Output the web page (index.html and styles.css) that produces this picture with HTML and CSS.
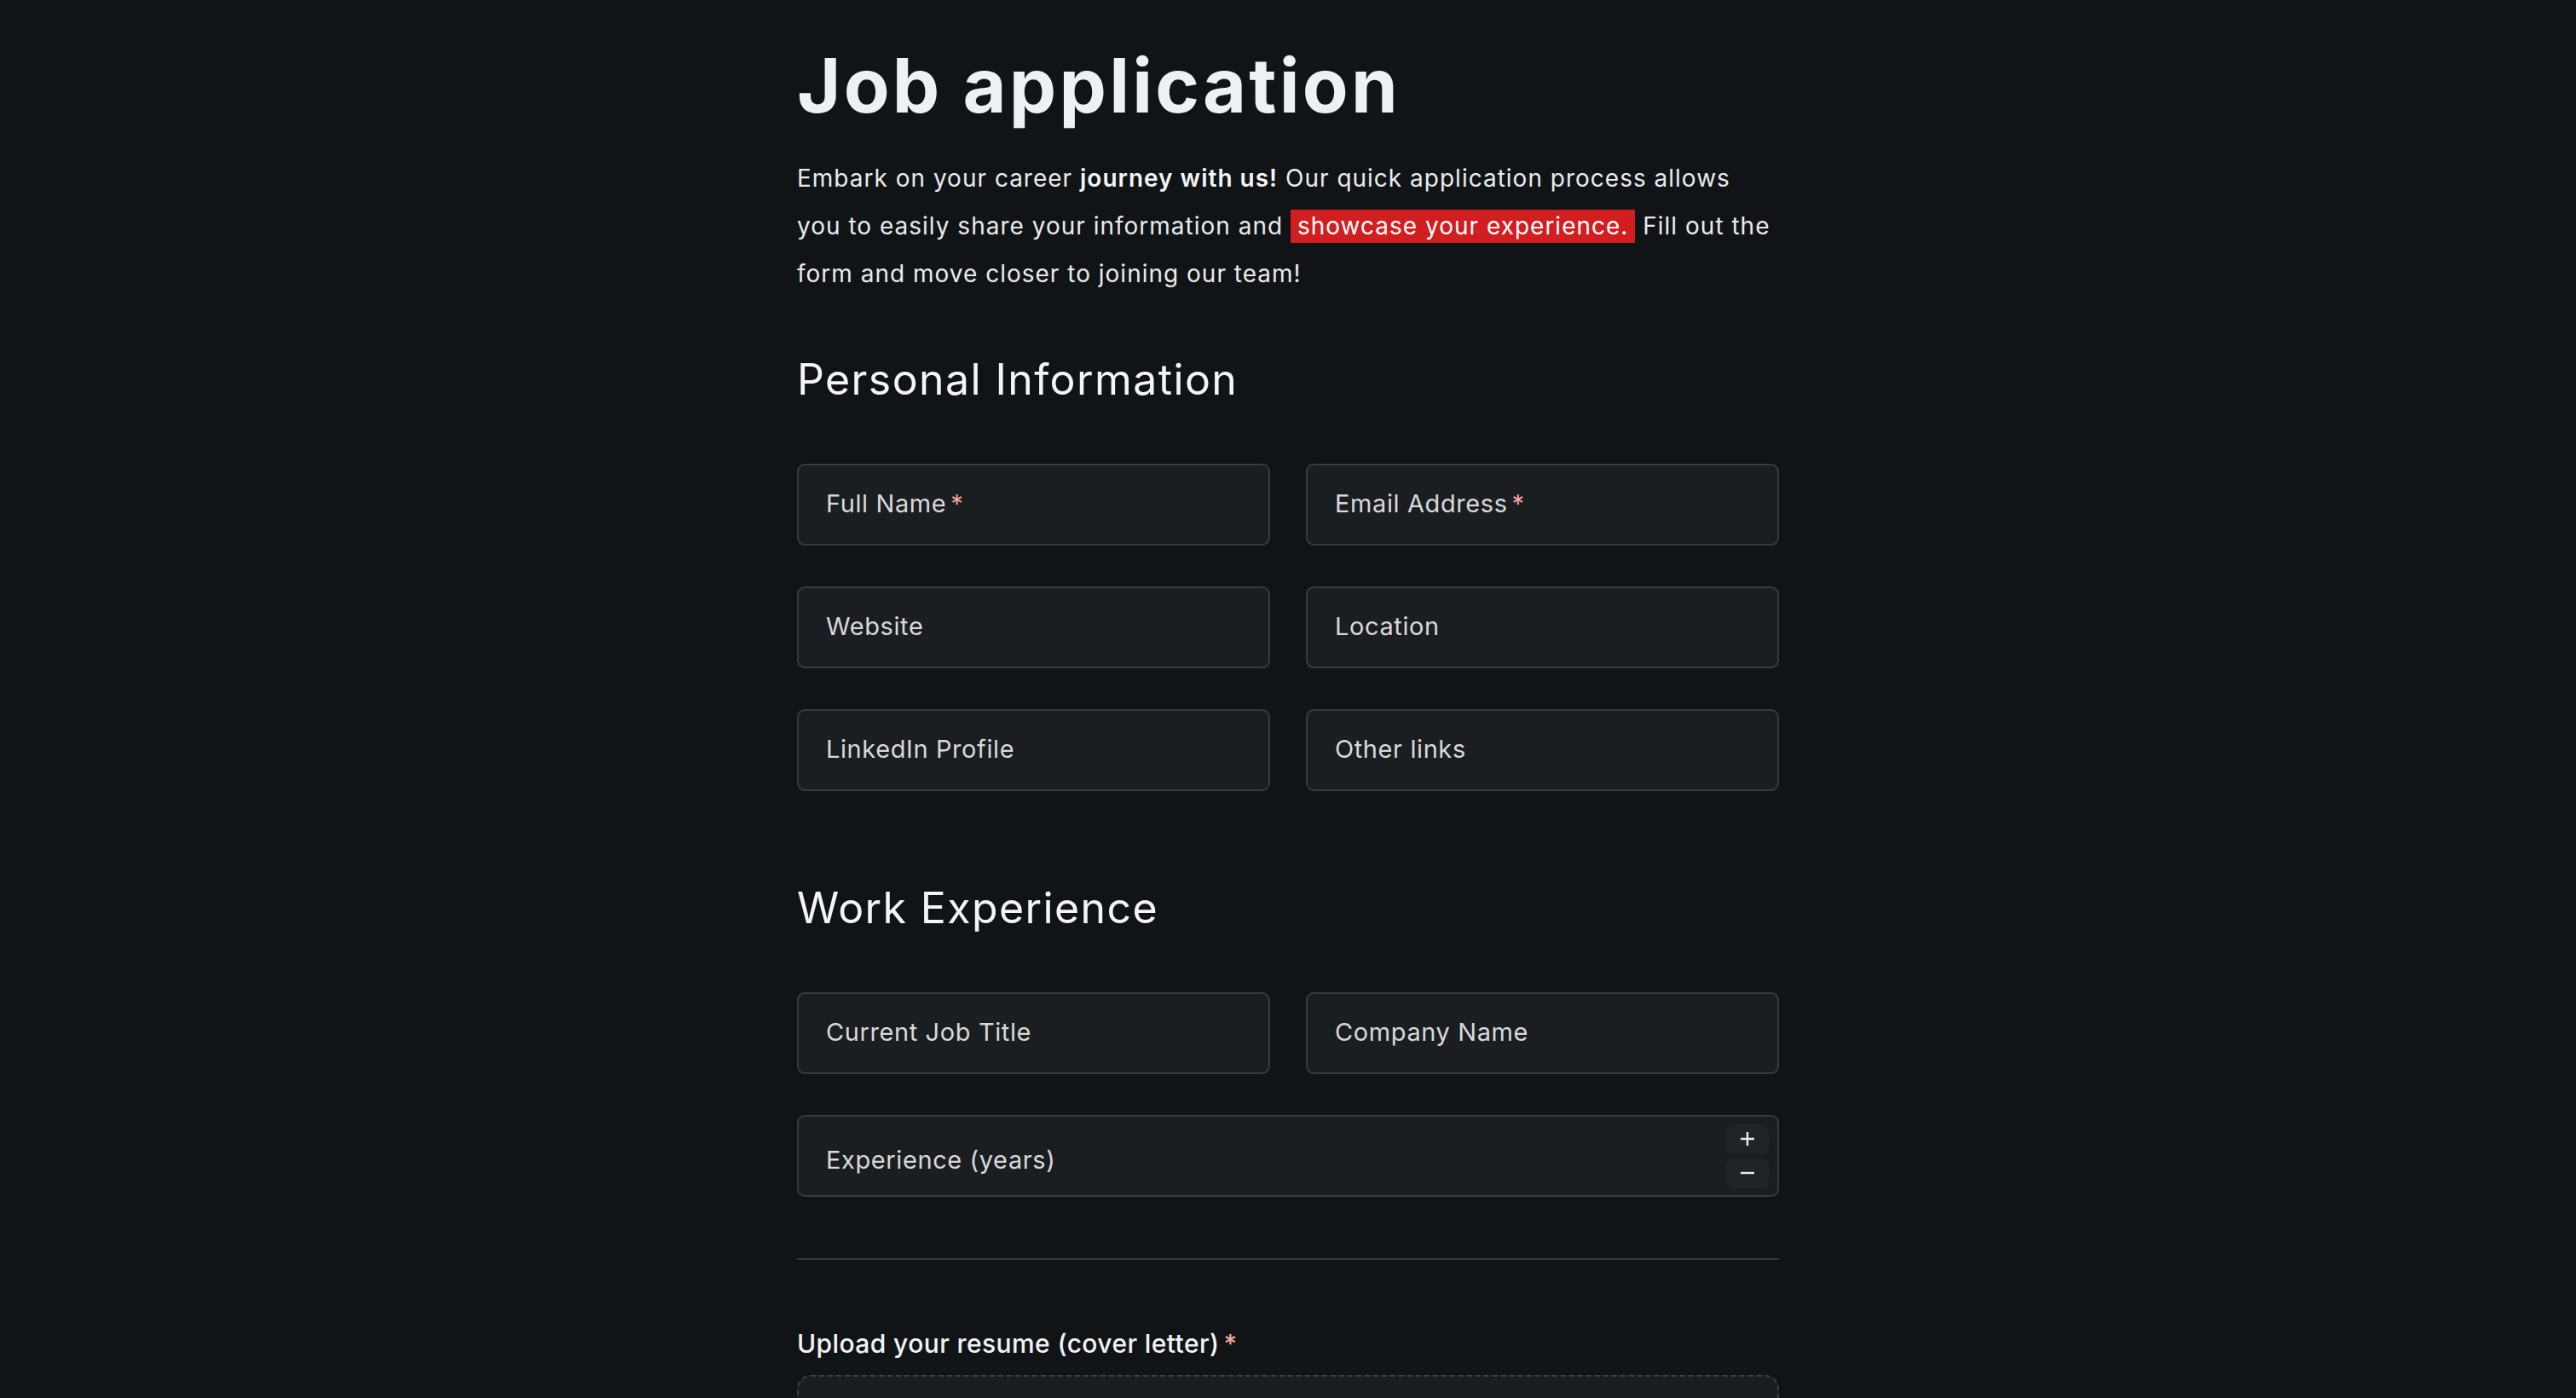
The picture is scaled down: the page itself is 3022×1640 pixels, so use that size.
FILE: index.html
```html
<!DOCTYPE html>
<html lang="en">
<head>
<meta charset="utf-8">
<title>Job application</title>
<link rel="stylesheet" href="styles.css">
</head>
<body>
<main class="container">
  <h1 class="title">Job application</h1>
  <p class="intro">Embark on your career <strong>journey with us!</strong> Our quick application process allows you to easily share your information and <mark class="hl">showcase your experience.</mark> Fill out the form and move closer to joining our team!</p>

  <section class="section">
    <h2 class="section-title">Personal Information</h2>
    <div class="grid">
      <div class="field"><span class="label">Full Name<span class="req">*</span></span></div>
      <div class="field"><span class="label">Email Address<span class="req">*</span></span></div>
      <div class="field"><span class="label">Website</span></div>
      <div class="field"><span class="label">Location</span></div>
      <div class="field"><span class="label">LinkedIn Profile</span></div>
      <div class="field"><span class="label">Other links</span></div>
    </div>
  </section>

  <section class="section section-work">
    <h2 class="section-title">Work Experience</h2>
    <div class="grid">
      <div class="field"><span class="label">Current Job Title</span></div>
      <div class="field"><span class="label">Company Name</span></div>
      <div class="field field-number span-2">
        <span class="label label-number">Experience (years)</span>
        <div class="spin">
          <div class="spin-btn">
            <svg width="20" height="20" viewBox="0 0 20 20"><path d="M10 2v16M2 10h16" stroke="#ececec" stroke-width="2.4" fill="none"/></svg>
          </div>
          <div class="spin-btn">
            <svg width="20" height="20" viewBox="0 0 20 20"><path d="M2 10h16" stroke="#ececec" stroke-width="2.4" fill="none"/></svg>
          </div>
        </div>
      </div>
    </div>
  </section>

  <hr class="divider">

  <section class="upload">
    <div class="upload-label">Upload your resume (cover letter)<span class="req">*</span></div>
    <div class="dropzone"></div>
  </section>
</main>
</body>
</html>
```
FILE: styles.css
```css
html, body {
  margin: 0;
  padding: 0;
  background: #111417;
}
body {
  font-family: Inter, "Noto Sans", sans-serif;
  color: #eceef0;
}
.container {
  width: 1152px;
  margin: 0 auto;
  padding-top: 48px;
}
.title {
  margin: 0;
  font-size: 88px;
  line-height: 104px;
  font-weight: 700;
  letter-spacing: 3.2px;
  color: #eef1f4;
}
.intro {
  margin: 29px 0 0;
  font-size: 28px;
  line-height: 56px;
  letter-spacing: 1px;
  color: #e9ebed;
  width: 1150px;
}
.intro strong {
  font-weight: 600;
  color: #f4f5f6;
}
.hl {
  background: #d11e20;
  color: #ffffff;
  padding: 2px 8px 3px;
}
.section {
  margin-top: 66px;
}
.section-work {
  margin-top: 107px;
}
.section-title {
  margin: 0 0 69px;
  font-size: 50px;
  line-height: 60px;
  font-weight: 400;
  letter-spacing: 1.4px;
  color: #f3f5f7;
}
.grid {
  display: grid;
  grid-template-columns: 1fr 1fr;
  column-gap: 42px;
  row-gap: 48px;
}
.span-2 {
  grid-column: 1 / span 2;
}
.field {
  box-sizing: border-box;
  height: 96px;
  background: #1b1e21;
  border: 2px solid #383b3e;
  border-radius: 9px;
  display: flex;
  align-items: center;
  padding: 0 10px 0 32px;
}
.label {
  font-size: 29px;
  letter-spacing: 0.6px;
  color: #d7d9db;
  margin-top: -4px;
}
.req {
  color: #f2a59c;
  margin-left: 5px;
}
.field-number {
  justify-content: space-between;
}
.label-number {
  margin-top: 8px;
}
.spin {
  display: flex;
  flex-direction: column;
  gap: 5px;
}
.spin-btn {
  width: 50px;
  height: 35px;
  background: #212427;
  border-radius: 8px;
  display: flex;
  align-items: center;
  justify-content: center;
}
.divider {
  margin: 72px 0 0;
  border: 0;
  height: 2px;
  background: #34373a;
}
.upload {
  margin-top: 78px;
}
.upload-label {
  font-size: 30px;
  line-height: 40px;
  font-weight: 500;
  letter-spacing: 0.4px;
  color: #f1f3f5;
}
.dropzone {
  margin-top: 17px;
  height: 300px;
  box-sizing: border-box;
  border: 2px dashed #3e4144;
  border-radius: 16px;
  background: #1b1e21;
}
```
